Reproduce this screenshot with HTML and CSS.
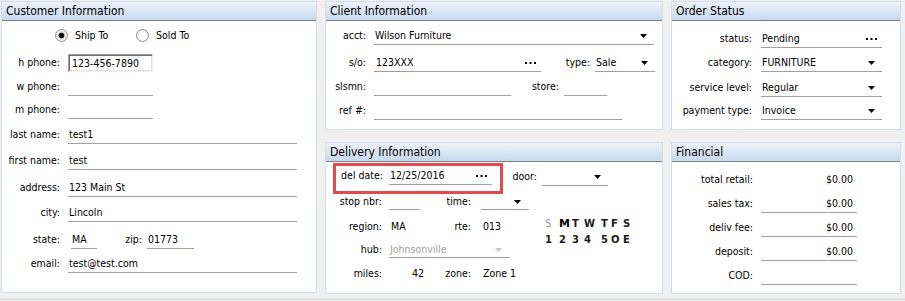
FILE: index.html
```html
<!DOCTYPE html>
<html>
<head>
    <title>Order Entry</title>
    <link rel="stylesheet" href="styles.css">
</head>
<body>
<div class="screen">

    <!-- Customer -->
    <div class="panel customer">
        <div class="panel-title">Customer Information</div>
        <div class="radio-row">
            <span class="radio checked"><span class="circle"></span>Ship To</span>
            <span class="radio"><span class="circle"></span>Sold To</span>
        </div>
        <div class="cust-grid">
            <span class="lbl">h phone:</span>
            <div><span class="textbox">123-456-7890</span></div>
            <span class="lbl">w phone:</span>
            <div><span class="field w-phone"></span></div>
            <span class="lbl">m phone:</span>
            <div><span class="field w-phone"></span></div>
            <span class="lbl">last name:</span>
            <div><span class="field w-name">test1</span></div>
            <span class="lbl">first name:</span>
            <div><span class="field w-name">test</span></div>
            <span class="lbl">address:</span>
            <div><span class="field w-name">123 Main St</span></div>
            <span class="lbl">city:</span>
            <div><span class="field w-name">Lincoln</span></div>
            <span class="lbl">state:</span>
            <div class="inline">
                <span class="field w-state">MA</span>
                <span class="lbl zip-lbl">zip:</span>
                <span class="field w-zip">01773</span>
            </div>
            <span class="lbl">email:</span>
            <div><span class="field w-name">test@test.com</span></div>
        </div>
    </div>

    <!-- Client -->
    <div class="panel client">
        <div class="panel-title">Client Information</div>
        <div class="client-grid">
            <span class="lbl">acct:</span>
            <div class="inline">
                <span class="field w-acct">Wilson Furniture
                    <svg class="arrow" width="7" height="4"><polygon points="0,0 7,0 3.5,4"/></svg>
                </span>
            </div>
            <span class="lbl">s/o:</span>
            <div class="inline">
                <span class="field w-so">123XXX
                    <svg class="dots" width="11" height="2"><rect x="0" y="0" width="2" height="2"/><rect x="4.5" y="0" width="2" height="2"/><rect x="9" y="0" width="2" height="2"/></svg>
                </span>
                <span class="lbl type-lbl">type:</span>
                <span class="field w-type">Sale
                    <svg class="arrow" width="7" height="4"><polygon points="0,0 7,0 3.5,4"/></svg>
                </span>
            </div>
            <span class="lbl">slsmn:</span>
            <div class="inline">
                <span class="field w-slsmn"></span>
                <span class="lbl store-lbl">store:</span>
                <span class="field w-store"></span>
            </div>
            <span class="lbl">ref #:</span>
            <div class="inline"><span class="field w-ref"></span></div>
        </div>
    </div>

    <!-- Order status -->
    <div class="panel order">
        <div class="panel-title">Order Status</div>
        <div class="order-grid">
            <span class="lbl">status:</span>
            <span class="field">Pending
                <svg class="dots" width="11" height="2"><rect x="0" y="0" width="2" height="2"/><rect x="4.5" y="0" width="2" height="2"/><rect x="9" y="0" width="2" height="2"/></svg>
            </span>
            <span class="lbl">category:</span>
            <span class="field">FURNITURE
                <svg class="arrow" width="7" height="4"><polygon points="0,0 7,0 3.5,4"/></svg>
            </span>
            <span class="lbl">service level:</span>
            <span class="field">Regular
                <svg class="arrow" width="7" height="4"><polygon points="0,0 7,0 3.5,4"/></svg>
            </span>
            <span class="lbl">payment type:</span>
            <span class="field">Invoice
                <svg class="arrow" width="7" height="4"><polygon points="0,0 7,0 3.5,4"/></svg>
            </span>
        </div>
    </div>

    <!-- Delivery -->
    <div class="panel delivery">
        <div class="panel-title">Delivery Information</div>
        <div class="delivery-body">
            <div class="drow-first">
                <div class="highlight">
                    <span class="lbl date-lbl">del date:</span>
                    <span class="field w-date">12/25/2016
                        <svg class="dots" width="11" height="2"><rect x="0" y="0" width="2" height="2"/><rect x="4.5" y="0" width="2" height="2"/><rect x="9" y="0" width="2" height="2"/></svg>
                    </span>
                </div>
                <div class="door">
                    <span class="lbl door-lbl">door:</span>
                    <span class="field w-door">
                        <svg class="arrow" width="7" height="4"><polygon points="0,0 7,0 3.5,4"/></svg>
                    </span>
                </div>
            </div>

            <div class="drow">
                <span class="dlbl">stop nbr:</span>
                <span class="dcol"><span class="field w-stop"></span></span>
                <span class="dlbl2">time:</span>
                <span class="field w-time">
                    <svg class="arrow" width="7" height="4"><polygon points="0,0 7,0 3.5,4"/></svg>
                </span>
            </div>

            <div class="dsplit">
                <div class="dleft">
                    <div class="drow region-row">
                        <span class="dlbl">region:</span>
                        <span class="dcol"><span class="plain">MA</span></span>
                        <span class="dlbl2">rte:</span>
                        <span class="plain rte">013</span>
                    </div>
                    <div class="drow hub-row">
                        <span class="dlbl">hub:</span>
                        <span class="field w-hub disabled">Johnsonville
                            <svg class="arrow" width="7" height="4"><polygon points="0,0 7,0 3.5,4"/></svg>
                        </span>
                    </div>
                </div>
                <div class="days">
                    <span class="off">S</span><span class="big">M</span><span>T</span><span>W</span><span>T</span><span>F</span><span>S</span>
                    <span>1</span><span>2</span><span>3</span><span>4</span><span>5</span><span>O</span><span>E</span>
                </div>
            </div>

            <div class="drow miles-row">
                <span class="dlbl">miles:</span>
                <span class="dcol"><span class="plain miles">42</span></span>
                <span class="dlbl2">zone:</span>
                <span class="plain">Zone 1</span>
            </div>
        </div>
    </div>

    <!-- Financial -->
    <div class="panel financial">
        <div class="panel-title">Financial</div>
        <div class="fin-grid">
            <span class="lbl">total retail:</span>
            <span class="amount bare">$0.00</span>
            <span class="lbl">sales tax:</span>
            <span class="field amount">$0.00</span>
            <span class="lbl">deliv fee:</span>
            <span class="field amount">$0.00</span>
            <span class="lbl">deposit:</span>
            <span class="field amount">$0.00</span>
            <span class="lbl">COD:</span>
            <span class="field amount"></span>
        </div>
    </div>

</div>
</body>
</html>
```

FILE: styles.css
```css
/* layout chung */
body {
    margin: 0;
    background: #f0f0f0;
    font-family: "DejaVu Sans Condensed", "DejaVu Sans", sans-serif;
    font-stretch: condensed;
    font-size: 10.5px;
    color: #000;
}

.screen {
    display: grid;
    grid-template-columns: 316px 338px 230px;
    grid-template-rows: 129px 152px;
    column-gap: 8px;
    row-gap: 12px;
    padding: 1px 0 5px 1px;
    border-bottom: 1px solid #d4d4d4;
}

.panel {
    box-sizing: border-box;
    background: #fff;
    border: 1px solid #d3dfed;
}

.panel-title {
    height: 18px;
    line-height: 18px;
    padding-left: 4px;
    font-size: 12px;
    background: linear-gradient(#edf2f9, #c6d9ee);
    border-bottom: 1px solid #7f7f7f;
}

.customer {
    grid-column: 1;
    grid-row: 1 / 3;
    margin-bottom: 1px;
}

.client { grid-column: 2; grid-row: 1; }
.order { grid-column: 3; grid-row: 1; }
.delivery { grid-column: 2; grid-row: 2; }
.financial { grid-column: 3; grid-row: 2; }

/* label + field */
.lbl {
    text-align: right;
    line-height: 17px;
    padding-bottom: 1px;
    white-space: nowrap;
}

.field {
    box-sizing: border-box;
    display: flex;
    align-items: center;
    height: 18px;
    line-height: 17px;
    padding-left: 1px;
    border-bottom: 1px solid #a0a0a0;
    white-space: nowrap;
}

.field .arrow,
.field .dots {
    margin-left: auto;
    margin-right: 7px;
    fill: #000;
}

.field .dots {
    margin-right: 5px;
}

.inline {
    display: flex;
    align-items: flex-end;
}

/* customer */
.radio-row {
    display: flex;
    align-items: center;
    height: 28px;
    padding-left: 53px;
}

.radio {
    display: flex;
    align-items: center;
    width: 81px;
}

.radio .circle {
    box-sizing: border-box;
    width: 13px;
    height: 13px;
    margin-right: 7px;
    border: 1px solid #8e8f8f;
    border-radius: 50%;
    background: radial-gradient(circle, #fff 40%, #e6e6e6 100%);
}

.radio.checked .circle {
    background: radial-gradient(circle, #111 0, #111 2.4px, #d8d8d8 3.2px, #f4f4f4 5px);
}

.cust-grid {
    display: grid;
    grid-template-columns: 58px 1fr;
    grid-template-rows: 23px 24px 23px 25px 26px 27px 25px 27px 24px;
    column-gap: 8px;
    align-items: end;
}

.textbox {
    box-sizing: border-box;
    display: block;
    width: 85px;
    height: 18px;
    line-height: 16px;
    padding-left: 3px;
    border: 1px solid;
    border-color: #a0a0a0 #f0f0f0 #f0f0f0 #a0a0a0;
    box-shadow: inset 1px 1px 0 #6d6d6d, inset -1px -1px 0 #e3e3e3;
}

.w-phone { width: 85px; }
.w-name { width: 229px; }
.w-state { width: 26px; margin-left: 3px; padding-left: 1px; }
.zip-lbl { width: 45px; padding-right: 5px; }
.w-zip { width: 47px; }

/* client */
.client-grid {
    display: grid;
    grid-template-columns: 40px 1fr;
    grid-template-rows: 24px 27px 24px 24px;
    column-gap: 8px;
    align-items: end;
}

.w-acct { width: 280px; }
.w-so { width: 167px; padding-left: 2px; }
.type-lbl { width: 49px; padding-right: 5px; }
.w-type { width: 60px; }
.w-slsmn { width: 137px; }
.store-lbl { width: 48px; padding-right: 5px; }
.w-store { width: 43px; }
.w-ref { width: 248px; }

/* order status */
.order-grid {
    display: grid;
    grid-template-columns: 80px 121px;
    grid-template-rows: 27px 24px 25px 23px;
    column-gap: 9px;
    align-items: end;
}

/* delivery */
.delivery-body {
    padding-top: 1px;
}

.drow-first {
    display: flex;
    align-items: flex-start;
}

.highlight {
    box-sizing: border-box;
    display: flex;
    width: 170px;
    height: 31px;
    margin-left: 7px;
    padding-top: 1px;
    border: 3px solid #e24a4c;
}

.date-lbl { width: 47px; margin-right: 6px; }
.w-date { width: 103px; }

.door {
    display: flex;
    margin-top: 5px;
}

.door-lbl { width: 34px; margin-right: 5px; }
.w-door { width: 66px; }

.drow {
    display: flex;
    height: 16px;
    line-height: 15px;
}

.drow .field {
    height: 16px;
    line-height: 15px;
}

.dlbl {
    width: 56px;
    margin-right: 7px;
    text-align: right;
    white-space: nowrap;
}

.dcol {
    width: 51px;
}

.dlbl2 {
    width: 31px;
    margin-right: 10px;
    text-align: right;
}

.w-stop { width: 31px; }
.w-time { width: 48px; }
.w-time .arrow { margin-right: 8px; }

.plain { display: block; padding-left: 2px; }
.rte { padding-left: 2px; }
.miles { width: 35px; padding-left: 0; text-align: right; }

.dsplit {
    display: flex;
    align-items: flex-start;
}

.dleft {
    width: 219px;
}

.region-row { margin-top: 9px; }
.hub-row { margin-top: 7px; }
.miles-row { margin-top: 8px; }

.w-hub { width: 121px; }
.disabled { color: #a0a0a0; }
.disabled .arrow { fill: #c8c8c8; margin-right: 8px; }

.days {
    display: grid;
    grid-template-columns: 14px 13px 12px 17px 10px 12px 9px;
    grid-auto-rows: 16px;
    margin-top: 6px;
    font-family: "DejaVu Sans", sans-serif;
    font-stretch: normal;
    font-weight: bold;
    font-size: 10px;
    line-height: 16px;
    color: #1a1a1a;
}

.days .off {
    font-weight: normal;
    color: #a0a0a0;
}

.days .big {
    color: #000;
    font-size: 11px;
}

/* financial */
.fin-grid {
    display: grid;
    grid-template-columns: 81px 96px;
    grid-template-rows: 27px 24px 24px 24px 24px;
    column-gap: 8px;
    align-items: end;
}

.amount {
    justify-content: flex-end;
    padding-right: 4px;
}

.bare {
    display: flex;
    height: 18px;
    line-height: 17px;
}
```
